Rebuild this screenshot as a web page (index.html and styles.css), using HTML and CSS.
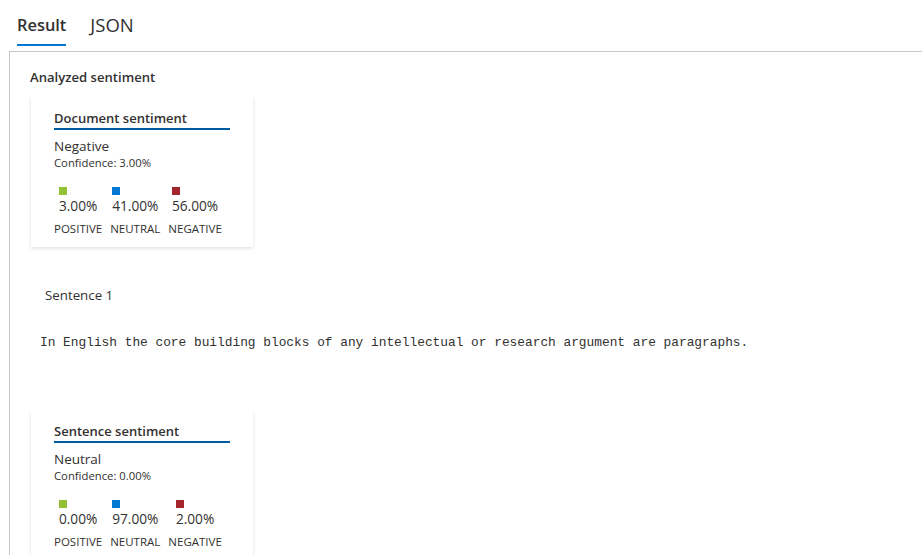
FILE: index.html
```html
<!DOCTYPE html>
<html>
<head>
<meta charset="utf-8">
<link rel="stylesheet" href="styles.css">
</head>
<body>
<div class="tabs">
  <div class="tab active">Result</div>
  <div class="tab">JSON</div>
</div>
<div class="panel">
  <div class="heading">Analyzed sentiment</div>
  <div class="card first">
    <div class="card-title">Document sentiment</div>
    <div class="label">Negative</div>
    <div class="conf">Confidence: 3.00%</div>
    <div class="scores">
      <div class="col"><div class="val"><span class="sq pos"></span>3.00%</div><div class="name">POSITIVE</div></div>
      <div class="col"><div class="val"><span class="sq neu"></span>41.00%</div><div class="name">NEUTRAL</div></div>
      <div class="col"><div class="val"><span class="sq neg"></span>56.00%</div><div class="name">NEGATIVE</div></div>
    </div>
  </div>
  <div class="sentence-title">Sentence 1</div>
  <div class="sentence-text">In English the core building blocks of any intellectual or research argument are paragraphs.</div>
  <div class="card second">
    <div class="card-title">Sentence sentiment</div>
    <div class="label">Neutral</div>
    <div class="conf">Confidence: 0.00%</div>
    <div class="scores">
      <div class="col"><div class="val"><span class="sq pos"></span>0.00%</div><div class="name">POSITIVE</div></div>
      <div class="col"><div class="val"><span class="sq neu"></span>97.00%</div><div class="name">NEUTRAL</div></div>
      <div class="col"><div class="val"><span class="sq neg"></span>2.00%</div><div class="name">NEGATIVE</div></div>
    </div>
  </div>
</div>
</body>
</html>
```
FILE: styles.css
```css
html, body {
  margin: 0;
  padding: 0;
  background: #fff;
  overflow: hidden;
}
body {
  font-family: "Open Sans", "Noto Sans", sans-serif;
  color: #323130;
  width: 922px;
  height: 555px;
}
.tabs {
  display: flex;
  gap: 24px;
  padding-left: 17px;
  height: 51px;
}
.tab {
  font-size: 18.5px;
  line-height: 24px;
  padding-top: 13px;
  height: 33px;
  color: #323130;
}
.tab.active {
  font-size: 16.4px;
  font-weight: 600;
  border-bottom: 2px solid #0078d4;
  height: 31px;
}
.panel {
  margin-left: 9px;
  border-top: 1px solid #c8c6c4;
  border-left: 1px solid #c8c6c4;
  padding: 15px 0 0 20px;
  height: 600px;
}
.heading {
  font-size: 13.1px;
  font-weight: 600;
  line-height: 20px;
}
.card {
  width: 222px;
  margin-left: 1px;
  box-sizing: border-box;
  padding: 11px 23px 11px 23px;
  background: #fff;
  box-shadow: 0 1.6px 3.6px rgba(0,0,0,0.13), 0 0.3px 0.9px rgba(0,0,0,0.11);
}
.card.first { margin-top: 10px; }
.card.second { margin-top: 58px; }
.card-title {
  font-size: 13px;
  font-weight: 600;
  line-height: 20px;
  border-bottom: 2px solid #005a9e;
}
.label {
  margin-top: 7px;
  font-size: 13.5px;
  line-height: 18px;
}
.conf {
  margin-top: 1px;
  font-size: 11.3px;
  line-height: 14px;
}
.scores {
  display: flex;
  gap: 8px;
  margin-top: 17px;
}
.col {
  display: flex;
  flex-direction: column;
  align-items: center;
}
.val {
  font-size: 13.7px;
  line-height: 18px;
  padding-top: 10px;
  position: relative;
}
.sq {
  position: absolute;
  left: 0;
  top: 0;
  width: 8px;
  height: 8px;
}
.sq.pos { background: #92c135; }
.sq.neu { background: #0078d4; }
.sq.neg { background: #a4262c; }
.name {
  margin-top: 7px;
  font-size: 11.5px;
  line-height: 14px;
}
.sentence-title {
  margin-top: 38px;
  margin-left: 15px;
  font-size: 13.3px;
  line-height: 20px;
}
.sentence-text {
  margin-top: 29px;
  margin-left: 10px;
  font-family: "Liberation Mono", monospace;
  font-size: 12.83px;
  line-height: 18px;
  white-space: nowrap;
}
```
